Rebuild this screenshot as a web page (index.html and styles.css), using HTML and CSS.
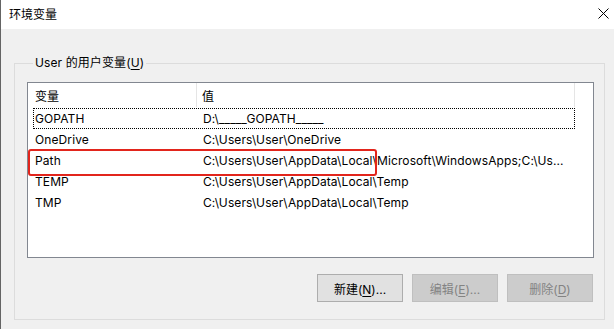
FILE: index.html
```html
<!DOCTYPE html>
<html lang="zh-CN">
<head>
<meta charset="utf-8">
<title>环境变量</title>
<link rel="stylesheet" href="styles.css">
</head>
<body>
<div class="window">
  <header class="titlebar">
    <span class="title">环境变量</span>
    <svg class="close" width="11" height="11" viewBox="0 0 11 11" aria-hidden="true">
      <path d="M0.5 0.5 L10.5 10.5 M10.5 0.5 L0.5 10.5" stroke="#000" stroke-width="1" fill="none"/>
    </svg>
  </header>
  <main class="content">
    <fieldset class="group">
      <legend class="legend">User 的用户变量(<u>U</u>)</legend>
      <div class="listview">
        <div class="lv-header">
          <div class="hcell hcell-name">变量</div>
          <div class="hcell hcell-value">值</div>
          <div class="hcell hcell-rest"></div>
        </div>
        <div class="lv-rows">
          <div class="row focused"><span class="c-name">GOPATH</span><span class="c-value">D:\_____GOPATH_____</span></div>
          <div class="row"><span class="c-name">OneDrive</span><span class="c-value">C:\Users\User\OneDrive</span></div>
          <div class="row"><span class="c-name">Path</span><span class="c-value">C:\Users\User\AppData\Local\Microsoft\WindowsApps;C:\Us...</span></div>
          <div class="row"><span class="c-name">TEMP</span><span class="c-value">C:\Users\User\AppData\Local\Temp</span></div>
          <div class="row"><span class="c-name">TMP</span><span class="c-value">C:\Users\User\AppData\Local\Temp</span></div>
        </div>
        <div class="highlight"></div>
      </div>
      <div class="buttons">
        <button class="btn">新建(<u>N</u>)...</button>
        <button class="btn" disabled>编辑(<u>E</u>)...</button>
        <button class="btn" disabled>删除(<u>D</u>)</button>
      </div>
    </fieldset>
  </main>
</div>
</body>
</html>
```
FILE: styles.css
```css
* { box-sizing: border-box; }
html, body { margin: 0; padding: 0; }
body {
  width: 614px;
  height: 329px;
  overflow: hidden;
  background: #f0f0f0;
  font-family: "Inter", "Noto Sans CJK SC", sans-serif;
  font-size: 12px;
  color: #000;
}
.window {
  height: 329px;
  border-left: 1px solid #646464;
  background: #f0f0f0;
}
.titlebar {
  height: 29px;
  background: #fff;
  display: flex;
  align-items: center;
  justify-content: space-between;
  padding: 0 5px 0 8px;
}
.title {
  font-family: "Noto Sans CJK SC", sans-serif;
  font-size: 12px;
  line-height: 16px;
  margin-top: -1px;
}
.close { display: block; margin-top: -3px; }
.content {
  padding: 26px 9px 0 13px;
}
.group {
  margin: 0;
  padding: 11px 10px 17px 12px;
  border: 1px solid #dcdcdc;
  min-width: 0;
}
.legend {
  margin-left: 6px;
  padding: 0 2px;
  line-height: 16px;
  font-size: 12px;
  letter-spacing: 0.1px;
}
.legend u { text-decoration-thickness: 1px; text-underline-offset: 2px; }
.listview {
  position: relative;
  height: 176px;
  background: #fff;
  border: 1px solid #828790;
}
.lv-header {
  display: flex;
  height: 25px;
  align-items: stretch;
}
.hcell {
  display: flex;
  align-items: center;
  font-family: "Noto Sans CJK SC", sans-serif;
  font-size: 12px;
}
.hcell-name { width: 169px; padding-left: 7px; border-right: 1px solid #e5e5e5; margin-bottom: 1px; }
.hcell-value { width: 378px; padding-left: 5px; border-right: 1px solid #e5e5e5; margin-bottom: 1px; }
.hcell-rest { flex: 1; }
.lv-rows {
  padding-left: 5px;
}
.row {
  display: flex;
  width: 542px;
  height: 21px;
  align-items: center;
  white-space: nowrap;
  letter-spacing: 0.1px;
}
.row.focused { outline: 1px dotted #000; outline-offset: -1px; }
.c-name { width: 164px; padding-left: 2px; }
.c-value { padding-left: 6px; }
.highlight {
  position: absolute;
  left: 0;
  top: 66px;
  width: 349px;
  height: 27px;
  border: 2px solid #e2251c;
  border-radius: 3px;
  pointer-events: none;
}
.buttons {
  display: flex;
  justify-content: flex-end;
  gap: 9px;
  margin-top: 16px;
  padding-right: 1px;
}
.btn {
  width: 86px;
  height: 28px;
  margin: 0;
  padding: 0;
  font-family: "Inter", "Noto Sans CJK SC", sans-serif;
  font-size: 12px;
  color: #000;
  background: #e1e1e1;
  border: 1px solid #adadad;
  border-radius: 0;
}
.btn:disabled {
  background: #cccccc;
  border-color: #bfbfbf;
  color: #838383;
}
.btn u { text-underline-offset: 2px; }
```
